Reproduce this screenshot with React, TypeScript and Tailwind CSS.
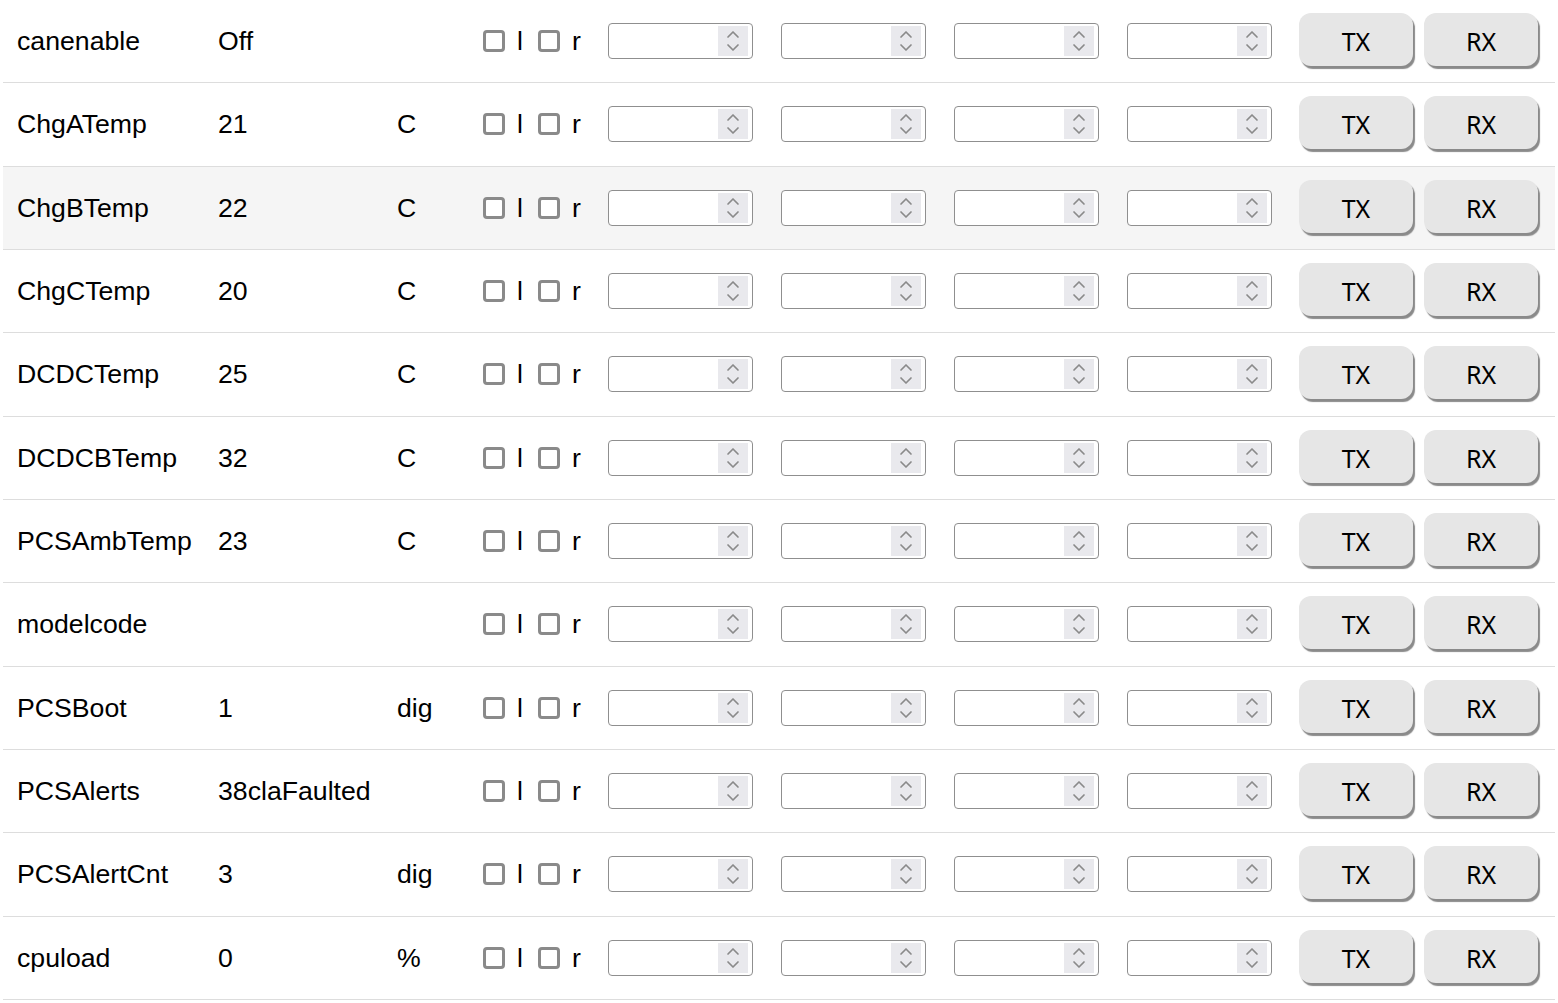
import React from 'react';

type Row = { name: string; value: string; unit: string };

const rows: Row[] = [
  { name: 'canenable', value: 'Off', unit: '' },
  { name: 'ChgATemp', value: '21', unit: 'C' },
  { name: 'ChgBTemp', value: '22', unit: 'C' },
  { name: 'ChgCTemp', value: '20', unit: 'C' },
  { name: 'DCDCTemp', value: '25', unit: 'C' },
  { name: 'DCDCBTemp', value: '32', unit: 'C' },
  { name: 'PCSAmbTemp', value: '23', unit: 'C' },
  { name: 'modelcode', value: '', unit: '' },
  { name: 'PCSBoot', value: '1', unit: 'dig' },
  { name: 'PCSAlerts', value: '38claFaulted', unit: '' },
  { name: 'PCSAlertCnt', value: '3', unit: 'dig' },
  { name: 'cpuload', value: '0', unit: '%' },
];

function Check() {
  return <div className="w-[22px] h-[22px] shrink-0 rounded-[4px] border-[3px] border-[#8a8a8a] bg-white" />;
}

function NumberBox() {
  return (
    <div className="relative w-[145px] h-[36px] shrink-0 rounded-[4px] border border-[#8f8f8f] bg-white">
      <div className="absolute right-[4px] top-[2px] w-[30px] h-[30px] bg-[#e9e9ed] flex items-center justify-center">
        <svg width="14" height="22" viewBox="0 0 14 22" fill="none" stroke="#8a8a8a" strokeWidth="1.7" strokeLinecap="round" strokeLinejoin="round">
          <path d="M2 7 L7 2 L12 7" />
          <path d="M2 15 L7 20 L12 15" />
        </svg>
      </div>
    </div>
  );
}

function Btn({ label }: { label: string }) {
  return (
    <button className="w-[114px] h-[53px] shrink-0 rounded-[12px] bg-[#e6e6e6] shadow-[2px_3px_1px_#8a8a8a] pt-[4px] text-[25px] text-black font-['Noto_Sans',sans-serif] leading-none">
      {label}
    </button>
  );
}

export default function App() {
  return (
    <div className="bg-white min-h-screen font-['Liberation_Sans',Arial,sans-serif] text-black text-[26.67px]">
      {rows.map((r, i) => (
        <div
          key={r.name}
          className={`ml-[3px] w-[1552px] h-[83.33px] flex items-center border-b border-[#dddddd] ${i === 2 ? 'bg-[#f5f5f5]' : ''}`}
        >
          <div className="pl-[14px] w-[215px] shrink-0">{r.name}</div>
          <div className="w-[179px] shrink-0">{r.value}</div>
          <div className="w-[86px] shrink-0">{r.unit}</div>
          <div className="w-[125px] shrink-0 flex items-center">
            <Check />
            <span className="ml-[12px] w-[21px]">l</span>
            <Check />
            <span className="ml-[12px]">r</span>
          </div>
          <div className="flex items-center gap-[28px]">
            <NumberBox />
            <NumberBox />
            <NumberBox />
            <NumberBox />
          </div>
          <div className="ml-[27px] flex items-center gap-[11px] pb-[3px]">
            <Btn label="TX" />
            <Btn label="RX" />
          </div>
        </div>
      ))}
    </div>
  );
}
